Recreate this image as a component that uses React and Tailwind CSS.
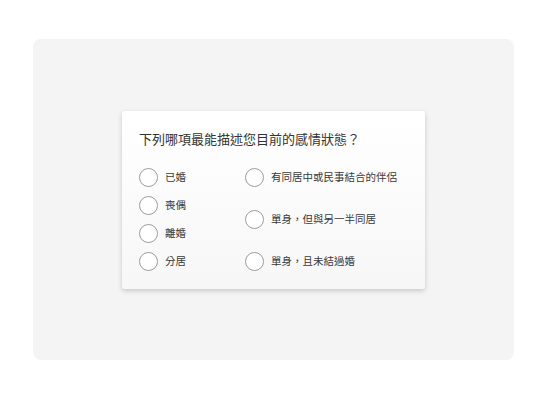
import React from 'react';

const left = ['已婚', '喪偶', '離婚', '分居'];
const right = ['有同居中或民事結合的伴侶', '單身，但與另一半同居', '單身，且未結過婚'];

function Option({ label }) {
  return (
    <label className="flex items-center gap-[7px] h-[19px]">
      <span className="w-[19px] h-[19px] rounded-full border border-[#9b9b9b] bg-white shrink-0" />
      <span className="text-[10.5px] text-[#3a3a3a] leading-none">{label}</span>
    </label>
  );
}

export default function App() {
  return (
    <div className="w-[547px] h-[400px] bg-white pt-[39px] pl-[33px]" style={{ fontFamily: '"Noto Sans CJK TC", "Noto Sans", sans-serif' }}>
      <div className="w-[481px] h-[321px] rounded-lg bg-[#f4f4f4] pt-[72px] pl-[89px]">
        <div className="w-[303px] h-[178px] rounded-[3px] bg-gradient-to-b from-white to-[#f7f7f7] shadow-[0_2px_5px_rgba(0,0,0,0.18)] pt-[20px] pl-[17px]">
          <h2 className="text-[13px] text-[#333] leading-[16px] font-normal">下列哪項最能描述您目前的感情狀態？</h2>
          <div className="mt-[21px] flex">
            <div className="w-[106px] flex flex-col gap-[9px]">
              {left.map(l => <Option key={l} label={l} />)}
            </div>
            <div className="flex flex-col justify-between h-[103px]">
              {right.map(l => <Option key={l} label={l} />)}
            </div>
          </div>
        </div>
      </div>
    </div>
  );
}
